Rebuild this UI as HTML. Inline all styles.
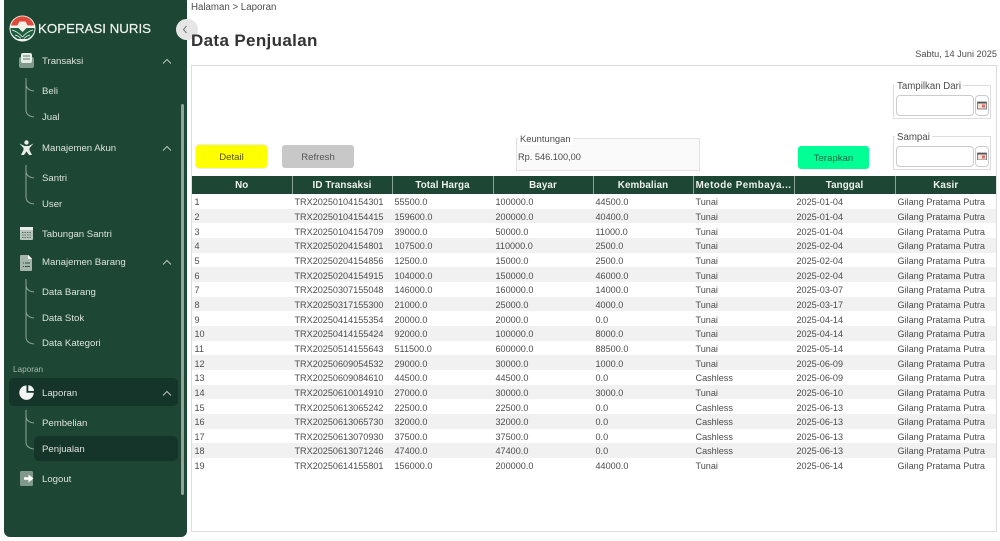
<!DOCTYPE html>
<html><head><meta charset="utf-8"><style>
html,body{margin:0;padding:0;width:1000px;height:541px;overflow:hidden;background:#fbfbfb;font-family:"Liberation Sans",sans-serif;color:#444}
.a{position:absolute;white-space:nowrap}
#main{left:187px;top:0;width:813px;height:538px;background:#fff}
#side{left:4px;top:-8px;width:183px;height:545px;background:#1d4734;border-radius:6px}
.m{left:42px;color:#dbe2de;font-size:9.6px;line-height:14px;letter-spacing:0;margin-top:1px}
.ic{position:absolute}
table{position:absolute;left:192px;top:176px;width:804px;border-collapse:collapse;table-layout:fixed;font-size:9.1px;color:#4d4d4d}
th{background:#1d4734;color:#eef2ef;height:18px;padding:0;font-size:9.8px;letter-spacing:.1px;border-left:1px solid #8aa396;font-weight:bold;overflow:hidden}
th:first-child{border-left:0}
td{height:14.67px;box-sizing:border-box;padding:2px 0 0 2.5px;line-height:12px;overflow:hidden;white-space:nowrap}
tr:nth-child(even) td{background:#f1f1f1}
.btn{height:23px;border-radius:3px;text-align:center;line-height:25px;font-size:9.6px}
.fs{border:1px solid #ddd;background:#fff}
.lg{background:#fff;padding:0 2px;font-size:9.7px;color:#4d4d4d;line-height:12px}
.in{width:76px;height:19px;border:1px solid #ccc;border-radius:4px;background:#fff}
.cal{width:12px;height:19px;border:1px solid #ccc;border-radius:4px;background:#fff}
</style></head><body>
<div class="a" id="main"></div>
<div class="a" style="left:191px;top:65px;width:804px;height:465px;border:1px solid #ddd;background:#fff"></div>
<div class="a" style="left:995px;top:65px;width:3px;height:1px;background:#ddd"></div>
<div class="a" id="side"></div>

<svg class="ic" style="left:9px;top:15px" width="27" height="27" viewBox="0 0 27 27">
<circle cx="13.5" cy="13.5" r="13" fill="#f4f4f0"/>
<path d="M2 10.500A11.800 11.800 0 0 1 25 10.500Z" fill="#dd4a3a"/>
<path d="M8 11l2.500-4.500h6L19 11l-5.500 5z" fill="#f4eee6"/>
<path d="M1.500 13h8l4 4 4-4h8a12 11 0 0 1-3 8l-4 3h-10l-4-3a12 11 0 0 1-3-8z" fill="#1c5f40"/>
<path d="M3 15c4 1 7 3 10.500 7M24 15c-4 1-7 3-10.500 7M6 20c2 .5 4 1.500 6 3.500M21 20c-2 .5-4 1.500-6 3.500" stroke="#f4f4f0" stroke-width=".8" fill="none"/>
</svg>
<div class="a" style="left:38px;top:21px;font-size:13.3px;line-height:16px;color:#f0f4f1;-webkit-text-stroke:.2px #f0f4f1">KOPERASI NURIS</div>
<div class="a" style="left:176px;top:19px;width:22px;height:21px;border-radius:11px;background:#e6e6e6"></div>
<svg class="ic" style="left:182px;top:25px" width="6" height="9" viewBox="0 0 6 9"><path d="M4.500 1L1.500 4.500L4.500 8" stroke="#777" fill="none"/></svg>
<div class="a" style="left:181px;top:104px;width:3px;height:391px;background:#8fa398;border-radius:2px"></div>

<!-- active -->
<div class="a" style="left:9px;top:378px;width:169px;height:28px;background:#16352a;border-radius:5px"></div>
<div class="a" style="left:34px;top:436px;width:144px;height:25px;background:#16352a;border-radius:5px"></div>

<!-- menu labels -->
<div class="a m" style="top:54px">Transaksi</div>
<div class="a m" style="top:84px">Beli</div>
<div class="a m" style="top:110px">Jual</div>
<div class="a m" style="top:141px">Manajemen Akun</div>
<div class="a m" style="top:171px">Santri</div>
<div class="a m" style="top:197px">User</div>
<div class="a m" style="top:227px">Tabungan Santri</div>
<div class="a m" style="top:255px">Manajemen Barang</div>
<div class="a m" style="top:285px">Data Barang</div>
<div class="a m" style="top:311px">Data Stok</div>
<div class="a m" style="top:336px">Data Kategori</div>
<div class="a" style="left:13px;top:364px;font-size:8.2px;line-height:11px;color:#a9b9b0">Laporan</div>
<div class="a m" style="top:386px">Laporan</div>
<div class="a m" style="top:416px">Pembelian</div>
<div class="a m" style="top:442px">Penjualan</div>
<div class="a m" style="top:472px">Logout</div>

<!-- chevrons and tree lines -->
<svg class="ic" style="left:0;top:0" width="187" height="500" viewBox="0 0 187 500" fill="none">
<g stroke="#b9c6bf" stroke-width="1">
<path d="M163 63.500l4-4 4 4M163 150.500l4-4 4 4M163 264.500l4-4 4 4M163 395.500l4-4 4 4"/>
</g>
<g stroke="#8fa398" stroke-width="1">
<path d="M26 78v32q0 6 8 7M26 84q0 6 8 7"/>
<path d="M26 165v32q0 6 8 7M26 171q0 6 8 7"/>
<path d="M26 279v58q0 6 8 7M26 285q0 6 8 7M26 311q0 6 8 7"/>
<path d="M26 410v32q0 6 8 7M26 416q0 6 8 7"/>
</g>
<!-- Transaksi -->
<rect x="19" y="57" width="15" height="11" rx="2" fill="#7f9a8c"/>
<rect x="21" y="53" width="11" height="10" rx="2" fill="#e6ece8"/><path d="M23 56h7M23 59h7" stroke="#5d7a6b"/>
<!-- Akun -->
<circle cx="26.500" cy="142.500" r="2.200" fill="#e8ede9"/>
<path d="M19.500 143.500l5 2.500h4l5-2.500-4 4.500v2l2.500 5h-3l-2.500-3.500-2.500 3.500h-3l2.500-5v-2z" fill="#e8ede9"/>
<!-- Tabungan -->
<rect x="20" y="227" width="13" height="13" rx="1" fill="#b9c6bf"/><rect x="20" y="227" width="13" height="3" fill="#e8ede9"/>
<path d="M22 232.500h9M22 235h9M22 237.500h9" stroke="#52705f" stroke-dasharray="1.500 1"/>
<!-- Barang -->
<path d="M21 255h7.500l3.500 3.500v11.500q0 1-1 1h-10q-1 0-1-1v-14q0-1 1-1z" fill="#a5b6ac"/>
<path d="M28 255l4 4h-4z" fill="#fff"/><path d="M23 263h1M25 263h5M23 266.500h1M25 266.500h5" stroke="#2c5443"/>
<!-- Laporan -->
<path d="M26.500 385.500a7.200 7.200 0 1 0 7.200 7.200h-7.200z" fill="#f2f5f3"/><path d="M28.300 391V385.200a6 6 0 0 1 5.700 5.800z" fill="#f2f5f3"/>
<!-- Logout -->
<rect x="20" y="471" width="13" height="15" rx="1.500" fill="#7f9a8c"/>
<path d="M24 478.500h5" stroke="#fff" stroke-width="2.500"/><path d="M28.500 474.500l5 4-5 4z" fill="#fff"/>
</svg>

<!-- header -->
<div class="a" style="left:191px;top:2px;font-size:9.7px;line-height:12px;color:#4d4d4d">Halaman &gt; Laporan</div>
<div class="a" style="left:191px;top:31px;font-size:17px;line-height:20px;font-weight:bold;color:#333;letter-spacing:.35px">Data Penjualan</div>
<div class="a" style="right:3px;top:48px;font-size:9.2px;line-height:12px;color:#4d4d4d">Sabtu, 14 Juni 2025</div>

<!-- buttons -->
<div class="a btn" style="left:196px;top:145px;width:71px;background:#ffff00;color:#55551a;box-shadow:0 0 0 1px #eee">Detail</div>
<div class="a btn" style="left:282px;top:145px;width:72px;background:#c8c8c8;color:#555">Refresh</div>
<div class="a btn" style="left:798px;top:146px;width:71px;background:#00ff94;color:#1f6347">Terapkan</div>

<!-- keuntungan -->
<div class="a fs" style="left:516px;top:138px;width:182px;height:31px;background:#fafafa;border-color:#e2e2e2"></div>
<div class="a lg" style="left:518px;top:133px;background:#fff;font-size:9.4px">Keuntungan</div>
<div class="a" style="left:518px;top:151px;font-size:9.2px;line-height:13px;color:#4d4d4d">Rp. 546.100,00</div>

<!-- dates -->
<div class="a fs" style="left:893px;top:85px;width:96px;height:32px"></div>
<div class="a lg" style="left:895px;top:81px">Tampilkan Dari</div>
<div class="a in" style="left:896px;top:95px"></div>
<div class="a cal" style="left:975px;top:95px"></div>
<div class="a fs" style="left:893px;top:136px;width:96px;height:32px"></div>
<div class="a lg" style="left:895px;top:132px">Sampai</div>
<div class="a in" style="left:896px;top:146px"></div>
<div class="a cal" style="left:975px;top:146px"></div>
<svg class="ic" style="left:976px;top:100px" width="12" height="60" viewBox="0 0 12 60">
<g><rect x="1.500" y="2" width="9" height="7" fill="#f1e3d6" stroke="#666" stroke-width=".8"/><rect x="1.500" y="2" width="9" height="1.500" fill="#555"/><rect x="6" y="4.500" width="3" height="3" fill="#e36a6a"/></g>
<g transform="translate(0,51)"><rect x="1.500" y="2" width="9" height="7" fill="#f1e3d6" stroke="#666" stroke-width=".8"/><rect x="1.500" y="2" width="9" height="1.500" fill="#555"/><rect x="6" y="4.500" width="3" height="3" fill="#e36a6a"/></g>
</svg>

<table>
<colgroup><col style="width:100px"><col style="width:100px"><col style="width:101px"><col style="width:100px"><col style="width:100px"><col style="width:101px"><col style="width:101px"><col style="width:101px"></colgroup>
<thead><tr><th>No</th><th>ID Transaksi</th><th>Total Harga</th><th>Bayar</th><th>Kembalian</th><th style="white-space:nowrap;letter-spacing:.45px">Metode Pembaya...</th><th>Tanggal</th><th>Kasir</th></tr></thead>
<tbody>
<tr><td>1</td><td>TRX20250104154301</td><td>55500.0</td><td>100000.0</td><td>44500.0</td><td>Tunai</td><td>2025-01-04</td><td>Gilang Pratama Putra</td></tr>
<tr><td>2</td><td>TRX20250104154415</td><td>159600.0</td><td>200000.0</td><td>40400.0</td><td>Tunai</td><td>2025-01-04</td><td>Gilang Pratama Putra</td></tr>
<tr><td>3</td><td>TRX20250104154709</td><td>39000.0</td><td>50000.0</td><td>11000.0</td><td>Tunai</td><td>2025-01-04</td><td>Gilang Pratama Putra</td></tr>
<tr><td>4</td><td>TRX20250204154801</td><td>107500.0</td><td>110000.0</td><td>2500.0</td><td>Tunai</td><td>2025-02-04</td><td>Gilang Pratama Putra</td></tr>
<tr><td>5</td><td>TRX20250204154856</td><td>12500.0</td><td>15000.0</td><td>2500.0</td><td>Tunai</td><td>2025-02-04</td><td>Gilang Pratama Putra</td></tr>
<tr><td>6</td><td>TRX20250204154915</td><td>104000.0</td><td>150000.0</td><td>46000.0</td><td>Tunai</td><td>2025-02-04</td><td>Gilang Pratama Putra</td></tr>
<tr><td>7</td><td>TRX20250307155048</td><td>146000.0</td><td>160000.0</td><td>14000.0</td><td>Tunai</td><td>2025-03-07</td><td>Gilang Pratama Putra</td></tr>
<tr><td>8</td><td>TRX20250317155300</td><td>21000.0</td><td>25000.0</td><td>4000.0</td><td>Tunai</td><td>2025-03-17</td><td>Gilang Pratama Putra</td></tr>
<tr><td>9</td><td>TRX20250414155354</td><td>20000.0</td><td>20000.0</td><td>0.0</td><td>Tunai</td><td>2025-04-14</td><td>Gilang Pratama Putra</td></tr>
<tr><td>10</td><td>TRX20250414155424</td><td>92000.0</td><td>100000.0</td><td>8000.0</td><td>Tunai</td><td>2025-04-14</td><td>Gilang Pratama Putra</td></tr>
<tr><td>11</td><td>TRX20250514155643</td><td>511500.0</td><td>600000.0</td><td>88500.0</td><td>Tunai</td><td>2025-05-14</td><td>Gilang Pratama Putra</td></tr>
<tr><td>12</td><td>TRX20250609054532</td><td>29000.0</td><td>30000.0</td><td>1000.0</td><td>Tunai</td><td>2025-06-09</td><td>Gilang Pratama Putra</td></tr>
<tr><td>13</td><td>TRX20250609084610</td><td>44500.0</td><td>44500.0</td><td>0.0</td><td>Cashless</td><td>2025-06-09</td><td>Gilang Pratama Putra</td></tr>
<tr><td>14</td><td>TRX20250610014910</td><td>27000.0</td><td>30000.0</td><td>3000.0</td><td>Tunai</td><td>2025-06-10</td><td>Gilang Pratama Putra</td></tr>
<tr><td>15</td><td>TRX20250613065242</td><td>22500.0</td><td>22500.0</td><td>0.0</td><td>Cashless</td><td>2025-06-13</td><td>Gilang Pratama Putra</td></tr>
<tr><td>16</td><td>TRX20250613065730</td><td>32000.0</td><td>32000.0</td><td>0.0</td><td>Cashless</td><td>2025-06-13</td><td>Gilang Pratama Putra</td></tr>
<tr><td>17</td><td>TRX20250613070930</td><td>37500.0</td><td>37500.0</td><td>0.0</td><td>Cashless</td><td>2025-06-13</td><td>Gilang Pratama Putra</td></tr>
<tr><td>18</td><td>TRX20250613071246</td><td>47400.0</td><td>47400.0</td><td>0.0</td><td>Cashless</td><td>2025-06-13</td><td>Gilang Pratama Putra</td></tr>
<tr><td>19</td><td>TRX20250614155801</td><td>156000.0</td><td>200000.0</td><td>44000.0</td><td>Tunai</td><td>2025-06-14</td><td>Gilang Pratama Putra</td></tr>
</tbody></table>
</body></html>
